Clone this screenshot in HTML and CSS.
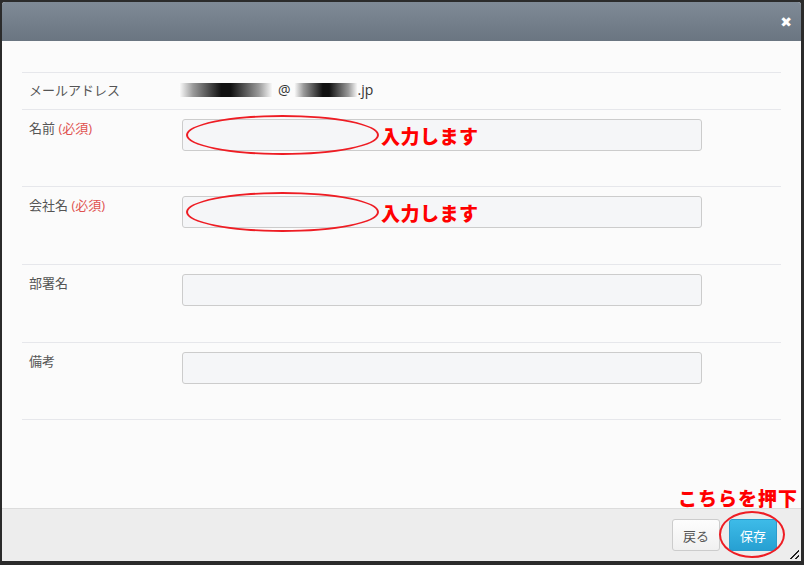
FILE: index.html
```html
<!DOCTYPE html>
<html lang="ja">
<head>
    <meta charset="UTF-8">
    <title>ユーザー情報編集</title>
    <link rel="stylesheet" href="styles.css">
</head>
<body>

    <div class="dialog">
        <div class="dialog-header">
            <span class="close">&#x2716;</span>
        </div>

        <div class="dialog-body">
            <div class="row row-email">
                <div class="label">メールアドレス</div>
                <div class="value">
                    <span class="mask mask-user"></span>@<span class="mask mask-domain"></span>.jp
                </div>
            </div>
            <div class="row row-name">
                <div class="label">名前 <span class="req">(必須)</span></div>
                <div class="field"><input type="text" class="input"></div>
            </div>
            <div class="row">
                <div class="label">会社名 <span class="req">(必須)</span></div>
                <div class="field"><input type="text" class="input"></div>
            </div>
            <div class="row">
                <div class="label">部署名</div>
                <div class="field"><input type="text" class="input"></div>
            </div>
            <div class="row row-last">
                <div class="label">備考</div>
                <div class="field"><input type="text" class="input"></div>
            </div>
        </div>

        <div class="dialog-footer">
            <button class="btn btn-back">戻る</button>
            <button class="btn btn-save">保存</button>
            <span class="grip"></span>
        </div>

        <!-- 注釈 -->
        <div class="note note-name">
            <span class="ring ring-input"></span>
            <span class="note-text">入力します</span>
        </div>
        <div class="note note-company">
            <span class="ring ring-input"></span>
            <span class="note-text">入力します</span>
        </div>
        <div class="note note-save">
            <span class="note-text">こちらを押下</span>
            <span class="ring ring-save"></span>
        </div>
    </div>

</body>
</html>
```

FILE: styles.css
```css
body {
    margin: 0;
    padding: 2px;
    background-color: #2b2b2b;
    font-family: "Open Sans", "Noto Sans CJK JP", sans-serif;
    color: #333;
}
.dialog {
    position: relative;
    width: 799px;
    height: 559px;
    background-color: #fbfbfb;
    border-radius: 3px 3px 0 0;
    display: flex;
    flex-direction: column;
    overflow: hidden;
}
.dialog-header {
    height: 39px;
    background: linear-gradient(#7f8a96, #6a7581);
    display: flex;
    align-items: center;
    justify-content: flex-end;
    padding-right: 9px;
}
.close {
    color: #fff;
    font-size: 14px;
    font-weight: bold;
    font-family: "DejaVu Sans", sans-serif;
}
.dialog-body {
    flex: 1;
    padding: 31px 20px 0 20px;
}
.row {
    display: flex;
    border-top: 1px solid #e6e7eb;
    height: 78px;
    box-sizing: border-box;
}
.row-email {
    height: 37px;
    align-items: center;
    padding-bottom: 3px;
}
.row-name {
    height: 77px;
}
.row-last {
    border-bottom: 1px solid #e6e7eb;
}
.label {
    width: 153px;
    padding-left: 7px;
    font-size: 13px;
    color: #555;
}
.row:not(.row-email) .label {
    padding-top: 8px;
}
.req {
    color: #e0524f;
}
.value {
    font-size: 14px;
    display: flex;
    align-items: center;
}
.mask {
    display: inline-block;
    height: 14px;
    background: linear-gradient(90deg, #fff 0%, #9a9a9a 15%, #111 45%, #111 55%, #9a9a9a 85%, #fff 100%);
}
.mask-user {
    width: 94px;
    margin-left: -3px;
    margin-right: 5px;
}
.mask-domain {
    width: 64px;
    margin-left: 3px;
}
.field {
    padding-top: 9px;
}
.input {
    width: 520px;
    height: 32px;
    box-sizing: border-box;
    background-color: #f5f6f8;
    border: 1px solid #ccc;
    border-radius: 3px;
    margin: 0;
}
.dialog-footer {
    height: 53px;
    box-sizing: border-box;
    border-top: 1px solid #dcdcdc;
    background-color: #ededed;
    display: flex;
    justify-content: flex-end;
    align-items: flex-start;
    gap: 9px;
    padding: 10px 24px 0 0;
    position: relative;
}
.btn {
    height: 32px;
    width: 48px;
    border-radius: 3px;
    font-size: 13px;
    font-family: "Noto Sans CJK JP", sans-serif;
    padding: 0;
    cursor: pointer;
}
.btn-back {
    background: linear-gradient(#fdfdfd, #f0f0f0);
    border: 1px solid #ccc;
    color: #555;
}
.btn-save {
    background: linear-gradient(#3dbbe8, #27a0d2);
    border: 1px solid #2a9bcc;
    color: #fff;
}
.grip {
    position: absolute;
    right: 2px;
    bottom: 2px;
    width: 11px;
    height: 11px;
    background: repeating-linear-gradient(135deg, transparent 0 2px, #222 2px 3.5px);
    clip-path: polygon(100% 0, 100% 100%, 0 100%);
}
.note {
    position: absolute;
    display: flex;
    align-items: center;
    color: #f00;
}
.note-text {
    font-family: "Noto Sans CJK JP", sans-serif;
    font-weight: 900;
    font-size: 19px;
    letter-spacing: 0.5px;
}
.ring {
    display: block;
    border: 2px solid #ee1d24;
    border-radius: 50%;
    box-sizing: border-box;
}
.ring-input {
    width: 193px;
    height: 40px;
    margin-right: 2px;
}
.note-name {
    left: 184px;
    top: 113px;
}
.note-company {
    left: 184px;
    top: 190px;
}
.note-save {
    left: 676px;
    top: 483px;
    flex-direction: column;
    align-items: flex-end;
}
.note-save .note-text {
    letter-spacing: 1px;
    line-height: 26px;
}
.ring-save {
    width: 66px;
    height: 47px;
    margin-right: 13px;
}
```
